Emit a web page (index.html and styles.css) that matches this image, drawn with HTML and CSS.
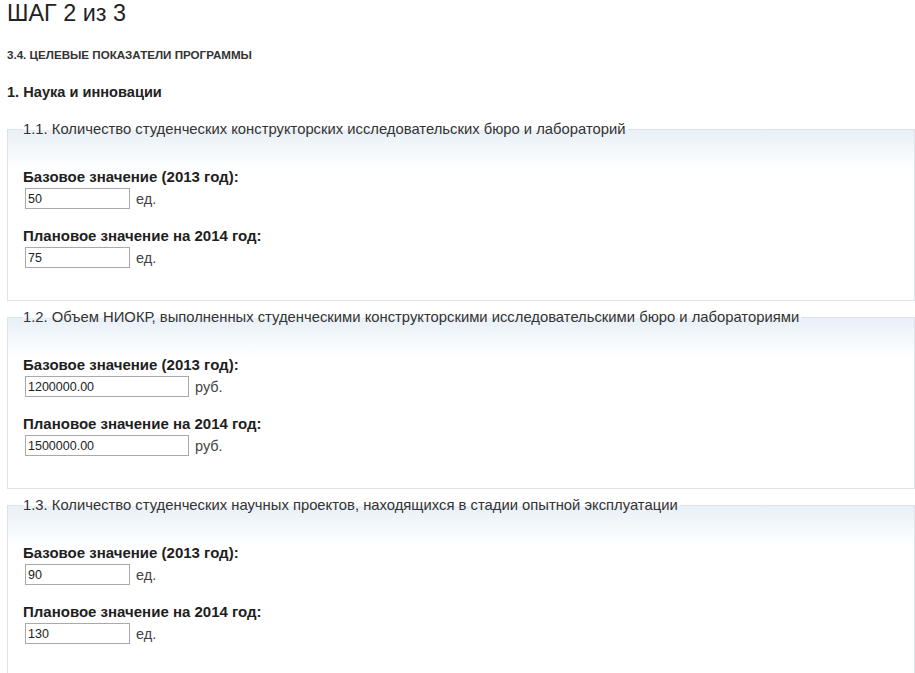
FILE: index.html
```html
<!DOCTYPE html>
<html lang="ru">
<head>
<meta charset="UTF-8">
<meta name="viewport" content="width=device-width, initial-scale=1.0">
<title>Шаг 2 из 3</title>
<link rel="stylesheet" href="styles.css">
</head>
<body>
    <div class="page">
        <h1 class="step-title">ШАГ 2 из 3</h1>
        <h2 class="section-title">3.4. ЦЕЛЕВЫЕ ПОКАЗАТЕЛИ ПРОГРАММЫ</h2>
        <h3 class="group-title">1. Наука и инновации</h3>

        <!-- 1.1 -->
        <fieldset class="indicator">
            <legend>1.1. Количество студенческих конструкторских исследовательских бюро и лабораторий</legend>
            <div class="field">
                <label class="field-label">Базовое значение (2013 год):</label>
                <div class="field-row">
                    <input class="field-input" type="text" value="50">
                    <span class="unit">ед.</span>
                </div>
            </div>
            <div class="field">
                <label class="field-label">Плановое значение на 2014 год:</label>
                <div class="field-row">
                    <input class="field-input" type="text" value="75">
                    <span class="unit">ед.</span>
                </div>
            </div>
        </fieldset>

        <!-- 1.2 -->
        <fieldset class="indicator">
            <legend>1.2. Объем НИОКР, выполненных студенческими конструкторскими исследовательскими бюро и лабораториями</legend>
            <div class="field">
                <label class="field-label">Базовое значение (2013 год):</label>
                <div class="field-row">
                    <input class="field-input wide" type="text" value="1200000.00">
                    <span class="unit">руб.</span>
                </div>
            </div>
            <div class="field">
                <label class="field-label">Плановое значение на 2014 год:</label>
                <div class="field-row">
                    <input class="field-input wide" type="text" value="1500000.00">
                    <span class="unit">руб.</span>
                </div>
            </div>
        </fieldset>

        <!-- 1.3 -->
        <fieldset class="indicator">
            <legend>1.3. Количество студенческих научных проектов, находящихся в стадии опытной эксплуатации</legend>
            <div class="field">
                <label class="field-label">Базовое значение (2013 год):</label>
                <div class="field-row">
                    <input class="field-input" type="text" value="90">
                    <span class="unit">ед.</span>
                </div>
            </div>
            <div class="field">
                <label class="field-label">Плановое значение на 2014 год:</label>
                <div class="field-row">
                    <input class="field-input" type="text" value="130">
                    <span class="unit">ед.</span>
                </div>
            </div>
        </fieldset>
    </div>
</body>
</html>
```

FILE: styles.css
```css
body {
    margin: 0;
    font-family: "Liberation Sans", Arial, sans-serif;
    color: #222;
    background: #fff;
}
.page {
    padding-left: 7px;
}
.step-title {
    margin: 0;
    font-size: 23.4px;
    line-height: 26px;
    font-weight: normal;
    color: #222;
}
.section-title {
    margin: 22px 0 0;
    font-size: 11.6px;
    line-height: 14px;
    font-weight: bold;
    color: #333;
}
.group-title {
    margin: 21px 0 0;
    font-size: 14.6px;
    line-height: 18px;
    font-weight: bold;
    color: #222;
}

/* блок показателя */
.indicator {
    margin: 19px 0 0;
    padding: 30px 15px 32px;
    border: 1px solid #dde3e8;
    background: linear-gradient(to bottom, #e8eff6 0, #f4f8fb 20px, #fff 40px);
}
.indicator + .indicator {
    margin-top: 7px;
}
.indicator legend {
    padding: 0 2px 0 0;
    font-size: 14.8px;
    line-height: 18px;
    color: #333;
}
.field + .field {
    margin-top: 18px;
}
.field-label {
    display: block;
    font-size: 15px;
    line-height: 18px;
    font-weight: bold;
    color: #1e1e1e;
}
.field-row {
    display: flex;
    align-items: center;
    gap: 6px;
    margin-top: 2px;
    padding-left: 2px;
}
.field-input {
    box-sizing: border-box;
    width: 105px;
    height: 21px;
    margin: 0;
    padding: 0 2px;
    border: 1px solid #a9a9a9;
    font-family: "Liberation Sans", Arial, sans-serif;
    font-size: 12.5px;
    color: #222;
    background: #fff;
}
.field-input.wide {
    width: 164px;
}
.unit {
    font-size: 14.5px;
    color: #444;
}
```
